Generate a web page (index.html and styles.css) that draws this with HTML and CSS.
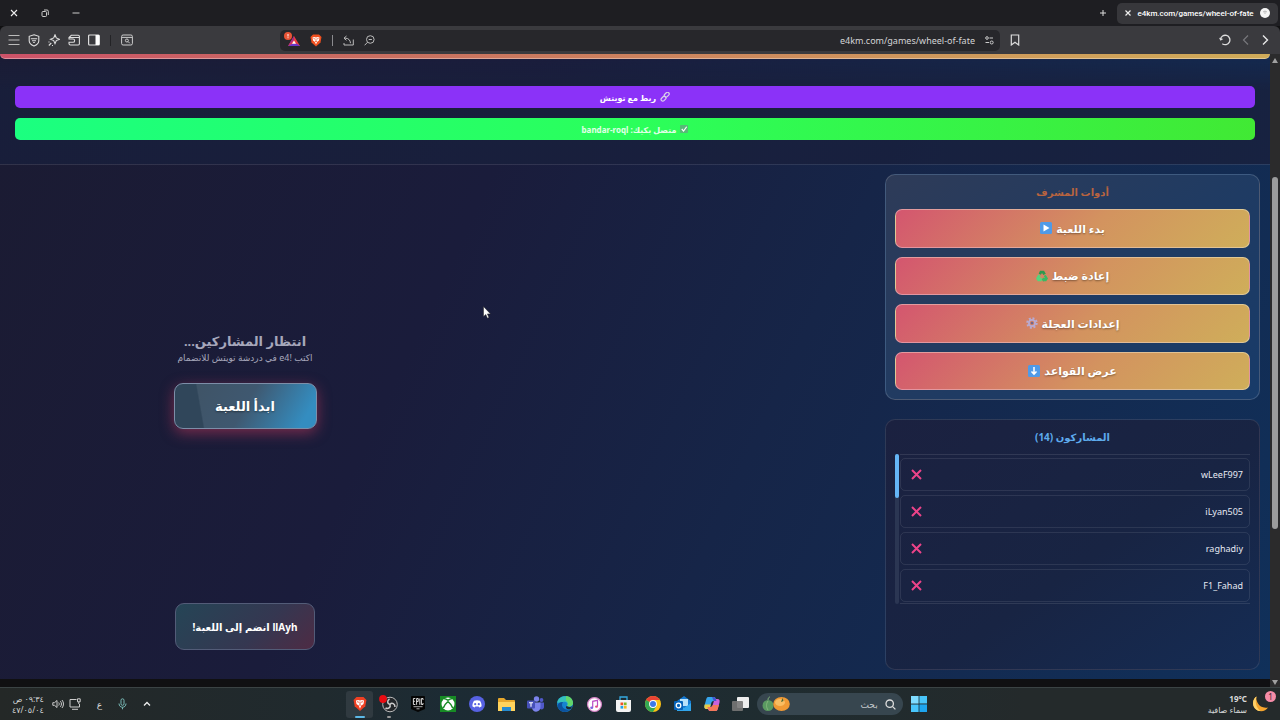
FILE: index.html
```
<!DOCTYPE html>
<html lang="ar" dir="rtl">
<head>
    <meta charset="UTF-8">
    <title>e4km.com/games/wheel-of-fate</title>
    <link rel="stylesheet" href="styles.css">
</head>
<body>
    <!-- Title bar -->
    <header class="titlebar">
        <div class="tab">
            <span class="favicon"><svg width="10" height="10" viewBox="0 0 10 10"><circle cx="5" cy="5" r="5" fill="#f4f4f4"/><path d="M3 4l2-1 2 1M5 3v3" stroke="#bbb" fill="none"/></svg></span>
            <span class="tab-title" dir="ltr">e4km.com/games/wheel-of-fate</span>
            <button class="icon-btn" aria-label="إغلاق علامة التبويب"><svg width="6" height="6" viewBox="0 0 6 6"><path d="M.5.5l5 5M5.5.5l-5 5" stroke="#eee" stroke-width="1.2"/></svg></button>
        </div>
        <button class="icon-btn new-tab" aria-label="علامة تبويب جديدة"><svg width="8" height="8" viewBox="0 0 8 8"><path d="M4 1v6M1 4h6" stroke="#ddd"/></svg></button>
        <div class="window-controls">
            <button class="icon-btn" aria-label="تصغير"><svg width="8" height="8" viewBox="0 0 8 8"><path d="M.5 4h7" stroke="#ccc"/></svg></button>
            <button class="icon-btn" aria-label="استعادة"><svg width="8" height="8" viewBox="0 0 8 8" fill="none" stroke="#ccc"><rect x="1" y="2.500" width="4.500" height="5" rx="1"/><path d="M3 1h3a1.300 1.300 0 0 1 1.300 1.300V6"/></svg></button>
            <button class="icon-btn" aria-label="إغلاق"><svg width="8" height="8" viewBox="0 0 8 8"><path d="M1 1l6 6M7 1L1 7" stroke="#eee" stroke-width="1.100"/></svg></button>
        </div>
    </header>

    <!-- Toolbar -->
    <nav class="toolbar">
        <div class="nav-buttons">
            <button class="icon-btn" aria-label="رجوع"><svg width="8" height="12" viewBox="0 0 8 12"><path d="M2 1.500L6.500 6 2 10.500" fill="none" stroke="#e8e8e8" stroke-width="1.400"/></svg></button>
            <button class="icon-btn" aria-label="للأمام"><svg width="8" height="12" viewBox="0 0 8 12"><path d="M6 1.500L1.500 6 6 10.500" fill="none" stroke="#77777b" stroke-width="1.200"/></svg></button>
            <button class="icon-btn" aria-label="تحديث"><svg width="12" height="12" viewBox="0 0 12 12"><path d="M1.500 5.500A4.700 4.700 0 1 1 3.300 9.700" fill="none" stroke="#ddd" stroke-width="1.300"/><path d="M0 3.800l1.500 3 2.800-1.700z" fill="#ddd"/></svg></button>
        </div>
        <button class="icon-btn bookmark" aria-label="إشارة مرجعية"><svg width="10" height="12" viewBox="0 0 10 12"><path d="M1.300 1h7.400v10L5 8.200 1.300 11z" fill="none" stroke="#ddd" stroke-width="1.200"/></svg></button>
        <div class="address-bar">
            <svg width="9" height="9" viewBox="0 0 9 9" fill="none" stroke="#ccc"><circle cx="2" cy="2" r="1.300"/><path d="M4.500 2H8M.500 6.500H4"/><circle cx="6.700" cy="6.500" r="1.500"/></svg>
            <input class="address" type="text" dir="ltr" aria-label="العنوان" value="e4km.com/games/wheel-of-fate">
            <button class="icon-btn" aria-label="تكبير"><svg width="11" height="11" viewBox="0 0 11 11" fill="none" stroke="#bbb"><circle cx="6.300" cy="4.500" r="3.800"/><path d="M3.600 7.200L.6 10.300M4.700 4.500h3.200"/></svg></button>
            <button class="icon-btn" aria-label="مشاركة"><svg width="11" height="11" viewBox="0 0 11 11" fill="none" stroke="#bbb"><path d="M3.500 1L1 3.200l2.500 2.200M1 3.200h1.500c3 0 4.800 2 5 5M1 8v2h9.300V4.500"/></svg></button>
            <span class="divider"></span>
            <button class="icon-btn" aria-label="Brave Shields"><svg width="12" height="13" viewBox="0 0 24 26"><path d="M6 1h12l5 5-2 11-9 8-9-8L1 6z" fill="#f0501f"/><path d="M5 7l4-1 3 1 3-1 4 1-1 6-4 3-2 5-2-5-4-3z" fill="#fff"/><path d="M7 9l3 1M17 9l-3 1M12 9v5l-2 2M12 14l2 2" stroke="#f0501f" stroke-width="1.500" fill="none"/></svg></button>
            <button class="icon-btn" aria-label="Brave Rewards"><svg width="16" height="16" viewBox="0 0 16 16"><path d="M10 4l6 10H4z" fill="#ec3b3b"/><path d="M4 14h12l-3-2.300H8z" fill="#6a35c8"/><path d="M4 14l6-10v4z" fill="#a02b8e"/><path d="M10 8.500l2 3.200H8z" fill="#fff"/><circle cx="4" cy="4" r="4" fill="#e85436"/><path d="M4 2v2.500M4 5.300v.9" stroke="#fff"/></svg></button>
        </div>
        <div class="tool-icons">
            <button class="icon-btn" aria-label="بحث في الصفحة"><svg width="12" height="12" viewBox="0 0 12 12" fill="none" stroke="#ccc"><rect x=".6" y="1" width="10.800" height="10" rx="1.500"/><path d="M1 3.400h10M7 7.500l1.800 1.800"/><circle cx="5.900" cy="6.500" r="1.500"/></svg></button>
            <span class="divider dark"></span>
            <button class="icon-btn" aria-label="الشريط الجانبي"><svg width="12" height="12" viewBox="0 0 12 12"><rect x=".6" y="1" width="10.800" height="10" rx="1" fill="none" stroke="#ddd" stroke-width="1.200"/><path d="M7.500 1H11v10H7.500z" fill="#fff"/></svg></button>
            <button class="icon-btn" aria-label="المحفظة"><svg width="12" height="12" viewBox="0 0 12 12" fill="none" stroke="#ddd" stroke-width="1.100"><path d="M1 4.800V3.500L3.300 1.300h6.900a1.200 1.200 0 0 1 1.200 1.200v7.300A1.200 1.200 0 0 1 10.200 11H2.500A1.500 1.500 0 0 1 1 9.500v-.8M1.500 3.500h9.800M.5 5H5a1.500 1.500 0 0 1 0 3.300H.5"/></svg></button>
            <button class="icon-btn" aria-label="Leo"><svg width="12" height="12" viewBox="0 0 12 12" fill="none" stroke="#ddd" stroke-width="1.100"><path d="M7 .8l1.300 3.100 3.100 1.400-3.100 1.300L7 9.700 5.700 6.600 2.500 5.300l3.200-1.400zM.8 11.500l2.500-2.500M1 8.500v-1M4 11.500h1"/></svg></button>
            <button class="icon-btn" aria-label="VPN"><svg width="12" height="13" viewBox="0 0 12 13" fill="none" stroke="#ddd" stroke-width="1.100"><path d="M6 .8l4.800 1.500v4.500c0 2.500-2 4.200-4.800 5.300C3.200 11 1.200 9.300 1.200 6.800V2.300z"/><path d="M2.800 4.800h6.400M4 6.700h4M5.200 8.500h1.600"/></svg></button>
            <button class="icon-btn" aria-label="القائمة"><svg width="12" height="12" viewBox="0 0 12 12"><path d="M.5 1.500h11M.5 6h11M.5 10.500h11" stroke="#bbb" stroke-width="1.200"/></svg></button>
        </div>
    </nav>

    <!-- Page -->
    <div class="viewport">
        <div class="page-scroll">
            <span class="arrow-up"></span>
            <span class="page-thumb"></span>
            <span class="arrow-down"></span>
        </div>
        <div class="page">
            <div class="top-strip"></div>
            <section class="links">
                <button class="link-bar twitch">
                    <svg width="10" height="10" viewBox="0 0 10 10" fill="none" stroke="#d9d0e8" stroke-width="1.200"><rect x="4" y="1" width="5.500" height="3.400" rx="1.700" transform="rotate(-45 6.700 2.700)"/><rect x=".8" y="5" width="5.500" height="3.400" rx="1.700" transform="rotate(-45 3.500 6.700)"/></svg>
                    <span>ربط مع تويتش</span>
                </button>
                <button class="link-bar kick">
                    <svg width="8" height="8" viewBox="0 0 9 9"><rect width="9" height="9" rx="1" fill="#58b878"/><path d="M2 4.500l2 2.300L7.500 2" fill="none" stroke="#fff" stroke-width="1.300"/></svg>
                    <span>متصل بكيك: bandar-roql</span>
                </button>
            </section>

            <main class="game">
                <aside class="sidebar">
                    <section class="panel admin">
                        <h2 class="panel-title">أدوات المشرف</h2>
                        <button class="admin-btn"><span>بدء اللعبة</span><svg width="12" height="12" viewBox="0 0 12 12"><rect width="12" height="12" rx="1.500" fill="#4f9ae8"/><path d="M3.500 2.500l6 3.500-6 3.500z" fill="#fff"/></svg></button>
                        <button class="admin-btn"><span>إعادة ضبط</span><svg width="12" height="12" viewBox="0 0 12 12"><path d="M4 .8L8 .8l1.800 3-2.500 1.100L6 2.900 4.900 4.800 2.700 3.700z" fill="#2c9a4e"/><path d="M2.200 4.600l2.600 1.100-1.200 2.100h2.200v3.400H1.800L0 8.500z" fill="#55d47c"/><path d="M9.700 4.800L12 8.500l-1.800 2.700H7.500v.8L5.700 9.500l1.800-2.300v.7h1.400L7.700 6z" fill="#39b863"/></svg></button>
                        <button class="admin-btn"><span>إعدادات العجلة</span><svg width="12" height="12" viewBox="0 0 12 12"><circle cx="6" cy="6" r="4.600" fill="none" stroke="#b9aad0" stroke-width="2.200" stroke-dasharray="1.900 1.700"/><circle cx="6" cy="6" r="3.100" fill="none" stroke="#b9aad0" stroke-width="1.800"/><circle cx="6" cy="6" r="1.300" fill="#73678c"/></svg></button>
                        <button class="admin-btn"><span>عرض القواعد</span><svg width="12" height="12" viewBox="0 0 12 12"><rect width="12" height="12" rx="1.500" fill="#4f9ae8"/><path d="M6 2v7M3.500 6.500L6 9.200l2.500-2.700" fill="none" stroke="#fff" stroke-width="1.500"/></svg></button>
                    </section>

                    <section class="panel players">
                        <h2 class="panel-title">المشاركون (14)</h2>
                        <div class="player-box">
                            <ul class="player-list">
                                <li class="player"><span>wLeeF997</span><button class="icon-btn" aria-label="حذف wLeeF997"><svg width="11" height="11" viewBox="0 0 11 11"><path d="M1 1l9 9M10 1l-9 9" stroke="#ec4389" stroke-width="2"/></svg></button></li>
                                <li class="player"><span>iLyan505</span><button class="icon-btn" aria-label="حذف iLyan505"><svg width="11" height="11" viewBox="0 0 11 11"><path d="M1 1l9 9M10 1l-9 9" stroke="#ec4389" stroke-width="2"/></svg></button></li>
                                <li class="player"><span>raghadiy</span><button class="icon-btn" aria-label="حذف raghadiy"><svg width="11" height="11" viewBox="0 0 11 11"><path d="M1 1l9 9M10 1l-9 9" stroke="#ec4389" stroke-width="2"/></svg></button></li>
                                <li class="player"><span>F1_Fahad</span><button class="icon-btn" aria-label="حذف F1_Fahad"><svg width="11" height="11" viewBox="0 0 11 11"><path d="M1 1l9 9M10 1l-9 9" stroke="#ec4389" stroke-width="2"/></svg></button></li>
                            </ul>
                            <div class="list-scroll"><div class="list-thumb"></div></div>
                        </div>
                    </section>
                </aside>

                <div class="wheel"></div>

                <section class="status">
                    <div class="waiting">
                        <h1 class="waiting-title">انتظار المشاركين...</h1>
                        <p class="waiting-hint">اكتب <bdi dir="ltr">e4!</bdi> في دردشة تويتش للانضمام</p>
                        <button class="start-btn">ابدأ اللعبة</button>
                    </div>
                    <button class="join-btn">llAyh انضم إلى اللعبة!</button>
                </section>
            </main>
        </div>
    </div>

    <!-- Taskbar -->
    <footer class="taskbar">
        <div class="weather">
            <span class="moon"><svg width="18" height="20" viewBox="0 0 18 20"><path d="M4.500 2.500C.5 5 0 11 3 14.500c3.500 4 10.500 3.500 13-1-5 .8-8.500-1-10.300-4.500C4.500 6.800 4 4.500 4.500 2.500z" fill="#f5a52e"/><path d="M4.500 2.500C.5 5 0 11 3 14.500c1.500 1.700 3.500 2.500 5.500 2.600C4.500 14 2.700 8.500 4.500 2.500z" fill="#ffd269"/></svg><span class="weather-badge">1</span></span>
            <div class="weather-text">
                <b dir="ltr">19°C</b>
                <span>سماء صافية</span>
            </div>
        </div>

        <div class="apps">
            <button class="app" aria-label="ابدأ"><svg width="16" height="16" viewBox="0 0 16 16" fill="#35b9f5"><path d="M0 0h7.600v7.600H0z" fill="#7fdcff"/><path d="M8.400 0H16v7.600H8.400zM0 8.400h7.600V16H0z" fill="#48c5fa"/><path d="M8.400 8.400H16V16H8.400z" fill="#1ea5ef"/></svg></button>
            <label class="search">
                <svg width="11" height="11" viewBox="0 0 11 11" fill="none" stroke="#ddd" stroke-width="1.300"><circle cx="4.700" cy="4.700" r="3.700"/><path d="M7.400 7.400l3 3"/></svg>
                <input type="text" placeholder="بحث" aria-label="بحث">
                <svg width="28" height="16" viewBox="0 0 28 16"><circle cx="6" cy="9.500" r="5.500" fill="#5a9a61"/><path d="M6 5c-2 3-2 6 0 9M6 4c0-2 1-3 2-3" fill="none" stroke="#85b87c"/><ellipse cx="19.500" cy="8" rx="8.300" ry="7" fill="#f09a35"/><ellipse cx="18" cy="6.500" rx="5" ry="3.500" fill="#f9bd62"/><path d="M19 6l1.500-4 1 3z" fill="#4b6632"/></svg>
            </label>
            <button class="app" aria-label="عرض المهام"><svg width="17" height="17" viewBox="0 0 17 17"><rect x="5" y="1" width="12" height="11" rx="1" fill="#eee"/><rect x="0" y="5" width="11" height="10" rx="1" fill="#777" opacity=".9"/></svg></button>
            <button class="app" aria-label="Copilot"><svg width="16" height="16" viewBox="0 0 16 16"><path d="M4.500 1H10c1.200 0 1.500 1 2 2.500L12.500 5H9.500C8 5 7.500 6 7 8l-1 3.500c-.4 1.300-1 1.500-2 1.500H2.500C.5 13 0 11.500.5 9.500L2.300 3C2.800 1.500 3.300 1 4.500 1z" fill="#36a6ed"/><path d="M.8 8.500h6L6 11.500c-.4 1.300-1 1.500-2 1.500H2.500C.5 13 0 11.500.5 9.500z" fill="#e9cb45"/><path d="M11.500 15H6c-1.200 0-1.500-1-2-2.500L3.500 11h3C8 11 8.500 10 9 8l1-3.500C10.400 3.200 11 3 12 3h1.500c2 0 2.500 1.500 2 3.500L13.700 13c-.5 1.500-1 2-2.200 2z" fill="#c962dc"/><path d="M11.500 15H6c-1.200 0-1.500-1-2-2.500L3.500 11h3C8 11 8.400 10.300 8.800 9H15l-1.300 4c-.5 1.500-1 2-2.200 2z" fill="#f4785a"/><path d="M8 1h2c1.200 0 1.500 1 2 2.500L12.500 5H9.800z" fill="#4456cf"/></svg></button>
            <button class="app" aria-label="Outlook"><svg width="17" height="16" viewBox="0 0 17 16"><path d="M3 5l7-5 7 5v10H3z" fill="#1478d1"/><path d="M6 3h8v7H6z" fill="#b8e2fb"/><path d="M3 7l7 5 7-5v8H3z" fill="#31a5ec"/><rect y="5" width="9" height="9" rx="1" fill="#0763ba"/><circle cx="4.500" cy="9.500" r="2.300" fill="none" stroke="#fff" stroke-width="1.300"/></svg></button>
            <button class="app" aria-label="Chrome"><svg width="16" height="16" viewBox="0 0 16 16"><circle cx="8" cy="8" r="8" fill="#fbc116"/><path d="M8 8L1.100 4A8 8 0 0 1 14.900 4H8z" fill="#e94335"/><path d="M8 8L1.100 4A8 8 0 0 0 8 16l3.500-6z" fill="#34a853"/><circle cx="8" cy="8" r="3.900" fill="#fff"/><circle cx="8" cy="8" r="3" fill="#3c79e8"/></svg></button>
            <button class="app" aria-label="Microsoft Store"><svg width="17" height="17" viewBox="0 0 17 17"><path d="M5 4V1h7v3" fill="none" stroke="#35a9e0" stroke-width="1.300"/><path d="M1 4h15v10a2 2 0 0 1-2 2H3a2 2 0 0 1-2-2z" fill="#f3f3f3"/><path d="M5.500 6.500h2.700v2.700H5.500z" fill="#ef5127"/><path d="M8.900 6.500h2.700v2.700H8.900z" fill="#7cb928"/><path d="M5.500 9.900h2.700v2.700H5.500z" fill="#1da4e8"/><path d="M8.900 9.900h2.700v2.700H8.900z" fill="#f7b720"/></svg></button>
            <button class="app" aria-label="iTunes"><svg width="15" height="15" viewBox="0 0 15 15"><circle cx="7.500" cy="7.500" r="6.900" fill="#fff" stroke="#d883c7" stroke-width="1.200"/><path d="M5.700 10.500V4.300l4.800-1v6" fill="none" stroke="#bc4fc4" stroke-width="1.200"/><ellipse cx="4.700" cy="10.700" rx="1.500" ry="1.200" fill="#7d66df"/><ellipse cx="9.500" cy="9.600" rx="1.500" ry="1.200" fill="#e34d86"/></svg></button>
            <button class="app" aria-label="Edge"><svg width="16" height="16" viewBox="0 0 16 16"><circle cx="8" cy="8" r="8" fill="#1684d0"/><path d="M.2 7C1-2 15-2 16 7c0 3-3 4-6 3 2-3-1-5-4-4C3 6 1 7 .2 7z" fill="#35c1bb"/><path d="M9 .1c5 .4 7 4 7 7 0 3-3 4-6 3 2-3 0-5-1-5z" fill="#63d66a"/><path d="M6 6c-3 4 1 9 7 7.500C9 18 2 16 .5 10 1 7 3 6 6 6z" fill="#0c529d"/><path d="M9.700 10c2 1.500 4.500 1 5.800-.3l-1.800 3.200C10.500 14 7.500 12 9.700 10z" fill="#1b2a33"/></svg></button>
            <button class="app" aria-label="Teams"><svg width="17" height="16" viewBox="0 0 17 16"><circle cx="9.500" cy="3" r="2.700" fill="#7b83eb"/><circle cx="14.500" cy="4" r="1.900" fill="#5059c9"/><path d="M12 6.500h5V11c0 2-2 3-4 2z" fill="#5059c9"/><path d="M5 6.500h8.500V11c0 6-8 6-8.500 1z" fill="#7b83eb"/><rect y="4.500" width="8" height="8" rx="1" fill="#4650b8"/><path d="M2 6.700h4M4 6.700v4" stroke="#fff" stroke-width="1.100"/></svg></button>
            <button class="app" aria-label="مستكشف الملفات"><svg width="17" height="15" viewBox="0 0 17 15"><path d="M0 2a1 1 0 0 1 1-1h5l2 2h8a1 1 0 0 1 1 1v10H0z" fill="#e8a82c"/><path d="M0 5h17v9H0z" fill="#ffd35c"/><path d="M4 10h9v4H4z" fill="#268bd0"/></svg></button>
            <button class="app" aria-label="Discord"><svg width="16" height="16" viewBox="0 0 16 16"><circle cx="8" cy="8" r="8" fill="#5762e3"/><path d="M5 4.700c2-.7 4-.7 6 0 1 1.300 1.700 3.500 1.600 5.500-.7.700-1.500 1-2.300 1.200l-.7-1H6.400l-.7 1c-.8-.2-1.600-.5-2.300-1.200C3.300 8.200 4 6 5 4.700z" fill="#fff"/><circle cx="6.200" cy="8.200" r="1.100" fill="#5762e3"/><circle cx="9.800" cy="8.200" r="1.100" fill="#5762e3"/></svg></button>
            <button class="app" aria-label="Xbox"><svg width="16" height="16" viewBox="0 0 16 16"><path d="M0 0h16v16H0z" fill="#178b25"/><circle cx="8" cy="8" r="6.500" fill="#fff"/><path d="M4 2.700C5.500 2.300 7 3.500 8 4.200c1-.7 2.500-1.900 4-1.500M8 5.500c-2 1.700-4 4-4.700 6.500M8 5.500c2 1.700 4 4 4.700 6.500" fill="none" stroke="#178b25" stroke-width="1.500"/></svg></button>
            <button class="app" aria-label="Epic Games"><svg width="14" height="16" viewBox="0 0 14 16"><path d="M0 1a1 1 0 0 1 1-1h12a1 1 0 0 1 1 1v12l-7 3-7-3z" fill="#050505"/><path d="M4.300 2.500H2.400v6h1.900M2.400 5.300h1.500M5.600 8.800V2.500h1.600v3H5.600M8.800 2.500v6.300M12 4V2.500h-1.600v6H12V7" fill="none" stroke="#eee" stroke-width=".9"/><path d="M2.500 10.700h9M5.500 12.800h3" stroke="#bbb" stroke-width=".9"/></svg></button>
            <button class="app open" aria-label="OBS"><svg width="19" height="18" viewBox="0 0 19 18"><circle cx="11" cy="9.500" r="7.300" fill="#24272a" stroke="#bbb"/><path d="M11 9.500c-3-.5-3-4-.5-5.500M11 9.500c2-2.500 5-.5 5 2.500M11 9.500c1 3-2 5-4.500 3.500" fill="none" stroke="#ccc" stroke-width="1.500"/><circle cx="4" cy="4" r="3.900" fill="#e90c12"/></svg></button>
            <button class="app active" aria-label="Brave"><svg width="14" height="16" viewBox="0 0 24 26"><path d="M6 1h12l5 5-2 11-9 8-9-8L1 6z" fill="#ef4023"/><path d="M5 7l4-1 3 1 3-1 4 1-1 6-4 3-2 5-2-5-4-3z" fill="#fff"/><path d="M7 9l3 1M17 9l-3 1M12 9v5l-2 2M12 14l2 2" stroke="#ef4023" stroke-width="1.500" fill="none"/></svg></button>
        </div>

        <div class="tray">
            <button class="icon-btn" aria-label="الرموز المخفية"><svg width="8" height="8" viewBox="0 0 8 8"><path d="M1 5.500l3-3 3 3" fill="none" stroke="#eee" stroke-width="1.300"/></svg></button>
            <button class="icon-btn" aria-label="الميكروفون"><svg width="9" height="12" viewBox="0 0 9 12" fill="none" stroke="#78b9b6"><rect x="3" y=".8" width="3" height="6.500" rx="1.500"/><path d="M1 5.500c0 5 7 5 7 0M4.500 9.300v2"/></svg></button>
            <span class="lang">ع</span>
            <div class="tray-group">
                <svg width="12" height="12" viewBox="0 0 12 12" fill="none" stroke="#ccc"><path d="M7.500 1.500H1v7.500h9.500V6M3 11.300h6M8.500.8h2.700v3H8.500zM9.800 4v2"/></svg>
                <svg width="12" height="10" viewBox="0 0 12 10" fill="none" stroke="#ccc"><path d="M.8 3.700h1.700L5 1.500v7L2.500 6.300H.8zM6.700 3.500c.7 1 .7 2 0 3M8.400 2.200c1.400 1.800 1.400 3.800 0 5.600M10 1c2 2.500 2 5.500 0 8"/></svg>
            </div>
            <div class="clock">
                <span>٠٩:٣٤ ص</span>
                <span>٤٧/٠٥/٠٤</span>
            </div>
        </div>
    </footer>

    <svg class="cursor" width="8" height="13" viewBox="0 0 8 13"><path d="M.5.5v10l2.300-2 1.600 3.700 1.600-.7-1.600-3.600h3.100z" fill="#fff" stroke="#222" stroke-width=".5"/></svg>
</body>
</html>
```
FILE: styles.css
```
* {
    box-sizing: border-box;
}

body {
    margin: 0;
    height: 100vh;
    display: flex;
    flex-direction: column;
    overflow: hidden;
    background: #101012;
    color: #fff;
    font-family: "Noto Sans", "DejaVu Sans", sans-serif;
    font-size: 9px;
}

button,
input {
    font-family: inherit;
    color: inherit;
}

.icon-btn {
    display: flex;
    align-items: center;
    justify-content: center;
    padding: 0;
    border: none;
    background: none;
    cursor: pointer;
}

svg {
    flex: none;
}

/* title bar */
.titlebar {
    display: flex;
    align-items: center;
    height: 26px;
    padding: 0 2px 0 10px;
    background: #1e1e22;
}

.tab {
    display: flex;
    align-items: center;
    justify-content: space-between;
    width: 161px;
    height: 21px;
    padding: 0 8px;
    border-radius: 5px;
    background: #37373b;
}

.favicon {
    display: flex;
}

.tab-title {
    font-family: Roboto, sans-serif;
    font-size: 8px;
    font-weight: 500;
}

.new-tab {
    margin-right: 10px;
}

.window-controls {
    display: flex;
    gap: 23px;
    margin-right: auto;
}

/* toolbar */
.toolbar {
    display: flex;
    align-items: center;
    height: 28px;
    padding: 0 11px 0 8px;
    border-radius: 6px 6px 0 0;
    background: #3a3a3e;
}

.nav-buttons {
    display: flex;
    gap: 11px;
    flex: 0 0 249px;
}

.bookmark {
    margin-left: 10px;
}

.address-bar {
    display: flex;
    align-items: center;
    gap: 10px;
    width: 720px;
    height: 21px;
    padding: 0 6px 0 4px;
    border-radius: 5px;
    background: #27272b;
}

.address {
    flex: 1;
    min-width: 0;
    padding: 0;
    border: none;
    background: none;
    color: #d4d4d6;
    font-size: 9px;
    text-align: right;
}

.divider {
    width: 1px;
    height: 11px;
    background: #8a8a8e;
}

.divider.dark {
    background: #232326;
}

.tool-icons {
    display: flex;
    align-items: center;
    justify-content: flex-end;
    gap: 8px;
    flex: 1;
}

.tool-icons .divider {
    margin: 0 2px;
}

/* page */
.viewport {
    display: flex;
    flex: 1;
    min-height: 0;
}

.page-scroll {
    display: flex;
    flex-direction: column;
    align-items: center;
    width: 10px;
    padding: 4px 0 2px;
    background: #2b2b2c;
}

.arrow-up,
.arrow-down {
    border: 3px solid transparent;
}

.arrow-up {
    border-top: none;
    border-bottom: 5px solid #a0a0a0;
}

.arrow-down {
    margin-top: auto;
    border-bottom: none;
    border-top: 5px solid #a0a0a0;
}

.page-thumb {
    width: 6px;
    height: 352px;
    margin-top: 114px;
    border-radius: 3px;
    background: #9c9c9c;
}

.page {
    display: flex;
    flex-direction: column;
    flex: 1;
    margin-bottom: 8px;
    background: linear-gradient(115deg, #1b1b32 0%, #1a1c3b 35%, #162548 60%, #10305a 100%);
}

.top-strip {
    height: 5px;
    border-bottom: 1px solid rgba(255, 255, 255, 0.35);
    border-radius: 0 0 8px 8px;
    background: linear-gradient(90deg, #cc5268, #c96e60 30%, #cf955c 70%, #cfab58);
}

.links {
    display: flex;
    flex-direction: column;
    gap: 10px;
    padding: 27px 15px 24px;
    border-bottom: 1px solid rgba(255, 255, 255, 0.1);
    background: linear-gradient(rgba(24, 32, 64, 0.2), rgba(24, 31, 60, 0.8) 30%);
}

.link-bar {
    display: flex;
    align-items: center;
    justify-content: center;
    gap: 4px;
    height: 22px;
    border: none;
    border-radius: 5px;
    font-size: 8px;
    font-weight: bold;
    cursor: pointer;
}

.twitch {
    background: #8b32f8;
}

.kick {
    background: linear-gradient(90deg, #1bff80, #2bff5b 50%, #41e934);
    color: #e2ffe8;
}

.game {
    display: grid;
    grid-template-columns: 375px 1fr 490px;
    flex: 1;
    padding: 9px 10px 9px 0;
}

.sidebar {
    display: flex;
    flex-direction: column;
    gap: 19px;
}

.panel {
    display: flex;
    flex-direction: column;
    padding: 9px;
    border: 1px solid rgba(255, 255, 255, 0.16);
    border-radius: 10px;
}

.admin {
    gap: 9px;
    height: 226px;
    background: linear-gradient(145deg, #2e3b58, #1f3b63 55%, #183b69);
}

.players {
    flex: 1;
    border-color: rgba(255, 255, 255, 0.1);
    background: linear-gradient(145deg, #1b2140, #182443 55%, #152c54);
}

.panel-title {
    margin: 0;
    font-size: 10px;
    line-height: 16px;
    text-align: center;
}

.admin .panel-title {
    color: #b9643f;
}

.players .panel-title {
    color: #5eabed;
}

.admin-btn {
    display: flex;
    align-items: center;
    justify-content: center;
    gap: 4px;
    flex: 1;
    border: 1px solid rgba(255, 255, 255, 0.35);
    border-radius: 7px;
    background: linear-gradient(135deg, #d4566f, #d3935f 55%, #cfae5a);
    font-size: 11px;
    font-weight: bold;
    text-shadow: 0 1px 2px rgba(0, 0, 0, 0.4);
    cursor: pointer;
}

.player-box {
    display: flex;
    gap: 1px;
    height: 150px;
    margin-top: 9px;
}

.player-list {
    display: flex;
    flex-direction: column;
    gap: 4px;
    flex: 1;
    margin: 0;
    padding: 3px 0 1px;
    border: solid rgba(255, 255, 255, 0.1);
    border-width: 1px 0;
    list-style: none;
}

.player {
    display: flex;
    align-items: center;
    justify-content: space-between;
    height: 33px;
    padding: 0 6px 0 10px;
    border: 1px solid rgba(255, 255, 255, 0.09);
    border-radius: 5px;
    color: #e6e9f2;
}

.list-scroll {
    width: 4px;
    border-radius: 2px;
    background: #2b3653;
}

.list-thumb {
    height: 44px;
    border-radius: 2px;
    background: #64b5f6;
}

.status {
    display: flex;
    flex-direction: column;
    align-items: center;
    justify-content: flex-end;
    gap: 174px;
    padding-bottom: 20px;
}

.waiting {
    display: flex;
    flex-direction: column;
    align-items: center;
    color: #a6a7bb;
}

.waiting-title {
    margin: 0;
    font-size: 13px;
    line-height: 20px;
}

.waiting-hint {
    margin: 0 0 18px;
    font-size: 9px;
    line-height: 14px;
}

.start-btn {
    width: 143px;
    height: 46px;
    border: 1px solid #7d8ea8;
    border-radius: 9px;
    background: linear-gradient(80deg, #30465a 19%, transparent 20%), linear-gradient(120deg, #3f5263, #3f5870 50%, #348dc0 90%);
    box-shadow: 0 4px 14px rgba(214, 60, 95, 0.5);
    color: #fff;
    font-size: 13px;
    font-weight: bold;
    text-shadow: 0 1px 2px rgba(0, 0, 0, 0.4);
    cursor: pointer;
}

.join-btn {
    width: 140px;
    height: 47px;
    padding: 0;
    border: 1px solid #535c78;
    border-radius: 9px;
    background: linear-gradient(135deg, #254556, #353751 60%, #4e2b44);
    font-size: 10px;
    font-weight: bold;
    cursor: pointer;
}

/* taskbar */
.taskbar {
    display: flex;
    align-items: center;
    height: 33px;
    padding: 0 10px 0 12px;
    border-top: 1px solid #3b4344;
    background: linear-gradient(90deg, #242827, #202a2e 25%, #1c2b34 35%, #1f2c30 60%, #242a2b 80%);
}

.weather,
.tray {
    display: flex;
    align-items: center;
}

.weather {
    gap: 5px;
    flex: 0 0 338px;
}

.moon {
    position: relative;
    display: flex;
}

.weather-badge {
    position: absolute;
    top: -3px;
    right: -6px;
    width: 11px;
    height: 11px;
    border-radius: 50%;
    background: #f58ca8;
    color: #402030;
    font-size: 8px;
    line-height: 11px;
    text-align: center;
}

.weather-text,
.clock {
    display: flex;
    flex-direction: column;
    align-items: flex-start;
    color: #d8dada;
    font-size: 8px;
    line-height: 11px;
}

.apps {
    display: flex;
    align-items: center;
    justify-content: space-between;
    width: 586px;
}

.app {
    display: flex;
    align-items: center;
    justify-content: center;
    position: relative;
    width: 27px;
    height: 27px;
    padding: 0;
    border: none;
    border-radius: 3px;
    background: none;
}

.app.active {
    background: #303a40;
}

.app.active::after,
.app.open::after {
    content: "";
    position: absolute;
    bottom: 0;
    width: 4px;
    height: 2px;
    border-radius: 1px;
    background: #999;
}

.app.active::after {
    width: 10px;
    background: #5cb8e6;
}

.search {
    display: flex;
    align-items: center;
    gap: 7px;
    width: 146px;
    height: 22px;
    padding: 0 7px 0 5px;
    border-radius: 11px;
    background: #37464f;
}

.search input {
    flex: 1;
    min-width: 0;
    padding: 0;
    border: none;
    background: none;
    font-size: 9px;
}

.search input::placeholder {
    color: #c4c8ca;
}

.tray {
    flex: 1;
    justify-content: flex-end;
    gap: 16px;
}

.tray-group {
    display: flex;
    align-items: center;
    gap: 5px;
}

.lang {
    color: #ddd;
    font-size: 9px;
}

.clock {
    margin-right: -8px;
}

.cursor {
    position: absolute;
    left: 483px;
    top: 306px;
}
```
